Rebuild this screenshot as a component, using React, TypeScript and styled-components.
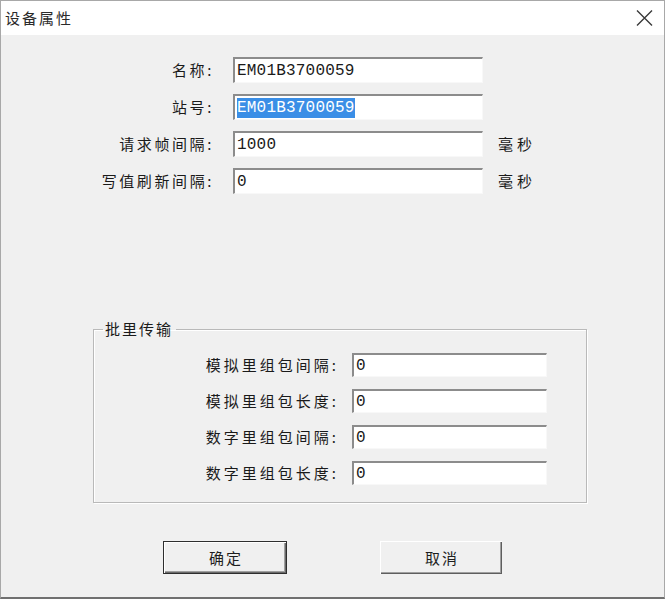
import React from "react";
import styled, { createGlobalStyle } from "styled-components";

const GlobalStyle = createGlobalStyle`
  html, body { margin: 0; padding: 0; background: #ffffff; }
  body { font-family: "Noto Sans CJK SC", "Noto Sans", sans-serif; color: #1e1e1e; }
`;

const Window = styled.div`
  width: 665px;
  height: 599px;
  box-sizing: border-box;
  border: 1px solid #a8a8a8;
  border-bottom: 2px solid #707070;
  background: #f0f0f0;
  display: flex;
  flex-direction: column;
`;

const TitleBar = styled.div`
  height: 34px;
  flex: none;
  background: #ffffff;
  display: flex;
  align-items: center;
  justify-content: space-between;
  padding: 0 11px 0 4px;
`;

const Title = styled.span`
  font-size: 15px;
  letter-spacing: 2px;
  color: #2b2b2b;
  line-height: 20px;
`;

const CloseButton = styled.span`
  display: flex;
  width: 18px;
  height: 17px;
  align-items: center;
  justify-content: center;
`;

const Body = styled.div`
  flex: 1;
  display: flex;
  flex-direction: column;
  padding-top: 22px;
`;

const FieldGrid = styled.div`
  display: grid;
  grid-template-columns: 213px 250px auto;
  column-gap: 19px;
  row-gap: 11px;
  align-items: center;
`;

const Label = styled.span<{ $spacing: number }>`
  font-size: 15px;
  letter-spacing: ${(p) => p.$spacing}px;
  text-align: right;
  white-space: nowrap;
  line-height: 20px;
  color: #1a1a1a;
`;

const Unit = styled.span`
  font-size: 15px;
  letter-spacing: 4px;
  margin-left: -4px;
  line-height: 20px;
  color: #1a1a1a;
`;

const TextBox = styled.div<{ $h: number }>`
  height: ${(p) => p.$h}px;
  box-sizing: border-box;
  background: #ffffff;
  border-top: 2px solid #8c8c8c;
  border-left: 2px solid #8c8c8c;
  border-right: 1px solid #f8f8f8;
  border-bottom: 1px solid #f8f8f8;
  padding-left: 2px;
  display: flex;
  align-items: center;
  font-family: "Liberation Mono", "DejaVu Sans Mono", monospace;
  font-size: 16px;
  letter-spacing: 0.2px;
  color: #1a1a1a;
  white-space: nowrap;
  overflow: hidden;
`;

const Selected = styled.span`
  background: #3a8ee6;
  color: #ffffff;
  line-height: 20px;
`;

const Group = styled.fieldset`
  margin: 125px 0 0 92px;
  width: 494px;
  box-sizing: border-box;
  padding: 14px 0 17px 0;
  border: 1px solid #b9b9b9;
  box-shadow: inset 1px 1px 0 #ffffff, 1px 1px 0 #ffffff;
  min-width: 0;
`;

const Legend = styled.legend`
  margin-left: 9px;
  padding: 0 3px 0 2px;
  font-size: 15px;
  letter-spacing: 2px;
  line-height: 20px;
  color: #1a1a1a;
`;

const GroupGrid = styled.div`
  display: grid;
  grid-template-columns: 245px 195px;
  column-gap: 13px;
  row-gap: 12px;
  align-items: center;
`;

const ButtonRow = styled.div`
  display: flex;
  gap: 93px;
  margin: 38px 0 0 162px;
`;

const Button = styled.div<{ $primary?: boolean; $w: number }>`
  width: ${(p) => p.$w}px;
  height: 33px;
  box-sizing: border-box;
  background: #f0f0f0;
  display: flex;
  align-items: center;
  justify-content: center;
  font-size: 15px;
  letter-spacing: 2px;
  padding-left: 2px;
  color: #1e1e1e;
  border: ${(p) => (p.$primary ? "1px solid #2e2e2e" : "none")};
  box-shadow: ${(p) =>
    p.$primary
      ? "inset 1px 1px 0 #ffffff, inset -1px -1px 0 #6a6a6a, inset -2px -2px 0 #a0a0a0"
      : "inset 1px 1px 0 #ffffff, inset -1px -1px 0 #5e5e5e, inset -2px -2px 0 #a0a0a0"};
`;

const mainFields = [
  { label: "名称:", value: "EM01B3700059" },
  { label: "站号:", value: "EM01B3700059", selected: true },
  { label: "请求帧间隔:", value: "1000", unit: "毫秒" },
  { label: "写值刷新间隔:", value: "0", unit: "毫秒" },
];

const groupFields = [
  { label: "模拟里组包间隔:", value: "0" },
  { label: "模拟里组包长度:", value: "0" },
  { label: "数字里组包间隔:", value: "0" },
  { label: "数字里组包长度:", value: "0" },
];

export default function App() {
  return (
    <>
      <GlobalStyle />
      <Window>
        <TitleBar>
          <Title>设备属性</Title>
          <CloseButton>
            <svg width="17" height="16" viewBox="0 0 17 16">
              <path d="M1 0.5 L16 15.5 M16 0.5 L1 15.5" stroke="#3a3a3a" strokeWidth="1.4" fill="none" />
            </svg>
          </CloseButton>
        </TitleBar>
        <Body>
          <FieldGrid>
            {mainFields.map((f) => (
              <React.Fragment key={f.label}>
                <Label $spacing={2.6}>{f.label}</Label>
                <TextBox $h={26}>{f.selected ? <Selected>{f.value}</Selected> : f.value}</TextBox>
                <Unit>{f.unit ?? ""}</Unit>
              </React.Fragment>
            ))}
          </FieldGrid>
          <Group>
            <Legend>批里传输</Legend>
            <GroupGrid>
              {groupFields.map((f) => (
                <React.Fragment key={f.label}>
                  <Label $spacing={3}>{f.label}</Label>
                  <TextBox $h={24}>{f.value}</TextBox>
                </React.Fragment>
              ))}
            </GroupGrid>
          </Group>
          <ButtonRow>
            <Button $primary $w={124}>确定</Button>
            <Button $w={122}>取消</Button>
          </ButtonRow>
        </Body>
      </Window>
    </>
  );
}
